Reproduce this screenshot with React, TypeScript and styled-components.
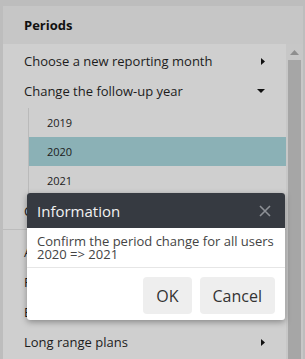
import React from 'react';
import styled, { createGlobalStyle } from 'styled-components';

const GlobalStyle = createGlobalStyle`
  html, body {
    margin: 0;
    padding: 0;
    background: #bdbdbd;
    font-family: "Open Sans", "Liberation Sans", sans-serif;
    overflow: hidden;
  }
`;

const Page = styled.div`
  position: relative;
  height: 359px;
  padding: 6px 2px 0 3px;
  box-sizing: border-box;
`;

const Panel = styled.div`
  display: flex;
  flex-direction: column;
  height: 100%;
  background: #cfcfcf;
`;

const PanelHeader = styled.div`
  height: 38px;
  display: flex;
  align-items: center;
  padding-left: 21px;
  background: #c6c6c6;
  font-size: 13px;
  font-weight: 700;
  color: #111;
`;

const Body = styled.div`
  flex: 1;
  display: flex;
  min-height: 0;
`;

const List = styled.div`
  flex: 1;
  padding-top: 2px;
  overflow: hidden;
`;

const Item = styled.div`
  height: 30px;
  display: flex;
  align-items: center;
  justify-content: space-between;
  padding: 0 21px;
  font-size: 13px;
  color: #1c1c1c;
`;

const Separator = styled.div`
  height: 1px;
  margin: 3px 0 7px;
  background: #bcbcbc;
`;

const SubMenu = styled.div`
  margin: 2px 0 1px 25px;
  border-left: 1px solid #bababa;
`;

const SubItem = styled.div<{ $active?: boolean }>`
  height: 29px;
  display: flex;
  align-items: center;
  padding-left: 18px;
  font-size: 11px;
  color: #1c1c1c;
  background: ${p => (p.$active ? '#8bb1b6' : 'transparent')};
`;

const Scrollbar = styled.div`
  width: 17px;
  display: flex;
  flex-direction: column;
  align-items: center;
  background: #c7c7c7;
`;

const ScrollArrow = styled.div`
  height: 16px;
  display: flex;
  align-items: center;
  justify-content: center;
`;

const Thumb = styled.div`
  flex: 1;
  width: 13px;
  margin-left: -1px;
  background: #a6a6a6;
`;

const Dialog = styled.div`
  position: absolute;
  left: 27px;
  top: 193px;
  width: 258px;
  background: #fff;
  border-radius: 3px;
  box-shadow: 0 2px 6px rgba(0, 0, 0, 0.35);
  overflow: hidden;
`;

const DialogHeader = styled.div`
  height: 35px;
  display: flex;
  align-items: center;
  justify-content: space-between;
  padding: 0 14px 0 10px;
  background: #363a41;
  color: #f2f2f2;
  font-size: 15px;
`;

const DialogBody = styled.div`
  padding: 7px 10px 6px;
  font-size: 13px;
  line-height: 13px;
  color: #444;
  border-bottom: 1px solid #e6e6e6;
`;

const DialogFooter = styled.div`
  display: flex;
  justify-content: flex-end;
  gap: 8px;
  padding: 9px 10px 6px;
`;

const Button = styled.button`
  height: 37px;
  padding: 0 13px;
  border: none;
  border-radius: 4px;
  background: #eeeeee;
  color: #333;
  font-family: inherit;
  font-size: 16px;
`;

const ArrowRight = () => (
  <svg width="4" height="7" viewBox="0 0 4 7">
    <path d="M0 0 L4 3.5 L0 7 Z" fill="#111" />
  </svg>
);

const ArrowDown = () => (
  <svg width="8" height="4" viewBox="0 0 8 4">
    <path d="M0 0 L8 0 L4 4 Z" fill="#111" />
  </svg>
);

const CloseIcon = () => (
  <svg width="12" height="12" viewBox="0 0 12 12">
    <path d="M1 1 L11 11 M11 1 L1 11" stroke="#8d9096" strokeWidth="1.6" />
  </svg>
);

const App = () => {
  return (
    <>
      <GlobalStyle />
      <Page>
        <Panel>
          <PanelHeader>Periods</PanelHeader>
          <Body>
            <List>
              <Item>
                Choose a new reporting month
                <ArrowRight />
              </Item>
              <Item>
                Change the follow-up year
                <ArrowDown />
              </Item>
              <SubMenu>
                <SubItem>2019</SubItem>
                <SubItem $active>2020</SubItem>
                <SubItem>2021</SubItem>
              </SubMenu>
              <Item>Close the current period</Item>
              <Separator />
              <Item>Archive periods</Item>
              <Item>Forecast periods</Item>
              <Item>Estimates</Item>
              <Item>
                Long range plans
                <ArrowRight />
              </Item>
            </List>
            <Scrollbar>
              <ScrollArrow>
                <svg width="9" height="5" viewBox="0 0 9 5">
                  <path d="M0 5 L4.5 0 L9 5 Z" fill="#8e8e8e" />
                </svg>
              </ScrollArrow>
              <Thumb />
            </Scrollbar>
          </Body>
        </Panel>
        <Dialog>
          <DialogHeader>
            Information
            <CloseIcon />
          </DialogHeader>
          <DialogBody>
            Confirm the period change for all users
            <br />
            2020 =&gt; 2021
          </DialogBody>
          <DialogFooter>
            <Button>OK</Button>
            <Button>Cancel</Button>
          </DialogFooter>
        </Dialog>
      </Page>
    </>
  );
};

export default App;
